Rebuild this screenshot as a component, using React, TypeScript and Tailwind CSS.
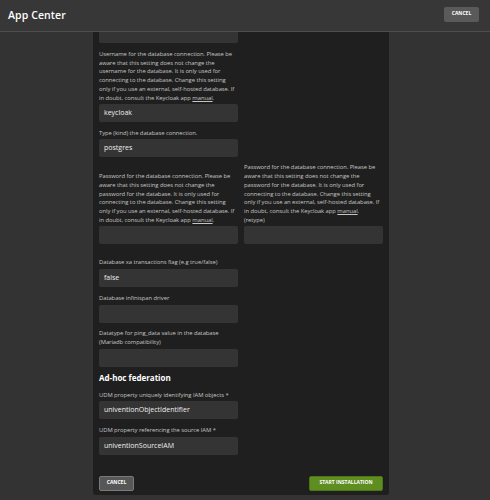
import React from "react";

const font = { fontFamily: '"Open Sans", "Noto Sans", sans-serif' };

function Label({ children }: { children: React.ReactNode }) {
  return (
    <div className="text-[5.85px] leading-[8.7px] text-[#c4c4c4] mb-[2px] tracking-[-0.05px]">{children}</div>
  );
}

function Input({ value }: { value?: string }) {
  return (
    <div className="h-[18px] rounded-[2px] bg-[#343434] flex items-center px-[5px] text-[7px] text-[#eeeeee]">
      {value}
    </div>
  );
}

const Manual = () => <span className="underline">manual</span>;

export default function App() {
  return (
    <div style={font} className="w-[490px] h-[500px] overflow-hidden bg-[#333333] flex flex-col">
      <div className="h-[32px] shrink-0 bg-[#373737] border-b border-[#4e4e4e] flex items-center justify-between pl-[8px] pr-[11px]">
        <div className="text-[10.5px] font-semibold text-white tracking-[0.1px]">App Center</div>
        <div className="w-[35px] h-[15px] rounded-[2px] bg-[#5a5a5a] flex items-center justify-center text-[5px] font-bold text-white mt-[-3px]">
          CANCEL
        </div>
      </div>
      <div className="pl-[93px]">
        <div className="w-[296px] h-[463px] bg-[#1f1f1f] rounded-b-[3px] px-[6px] flex flex-col">
          <div className="h-[11px] rounded-b-[2px] bg-[#343434] w-[139px]" />
          <div className="w-[139px] mt-[7px]">
            <Label>
              Username for the database connection. Please be aware that this setting does not change the username for the database. It is only used for connecting to the database. Change this setting only if you use an external, self-hosted database. If in doubt, consult the Keycloak app <Manual />.
            </Label>
            <Input value="keycloak" />
          </div>
          <div className="w-[139px] mt-[6.5px]">
            <Label>Type (kind) the database connection.</Label>
            <Input value="postgres" />
          </div>
          <div className="flex gap-[6px] items-end mt-[6px]">
            <div className="w-[139px]">
              <Label>
                Password for the database connection. Please be aware that this setting does not change the password for the database. It is only used for connecting to the database. Change this setting only if you use an external, self-hosted database. If in doubt, consult the Keycloak app <Manual />.
              </Label>
              <Input />
            </div>
            <div className="w-[139px]">
              <Label>
                Password for the database connection. Please be aware that this setting does not change the password for the database. It is only used for connecting to the database. Change this setting only if you use an external, self-hosted database. If in doubt, consult the Keycloak app <Manual />.
                <br />
                (retype)
              </Label>
              <Input />
            </div>
          </div>
          <div className="w-[139px] mt-[14px]">
            <Label>Database xa transactions flag (e.g true/false)</Label>
            <Input value="false" />
          </div>
          <div className="w-[139px] mt-[7px]">
            <Label>Database infinispan driver</Label>
            <Input />
          </div>
          <div className="w-[139px] mt-[6.5px]">
            <Label>Datatype for ping_data value in the database (Mariadb compatibility)</Label>
            <Input />
          </div>
          <div className="mt-[5px] text-[8px] leading-[12px] font-bold text-white">Ad-hoc federation</div>
          <div className="w-[139px] mt-[7px]">
            <Label>UDM property uniquely identifying IAM objects *</Label>
            <Input value="univentionObjectIdentifier" />
          </div>
          <div className="w-[139px] mt-[7px]">
            <Label>UDM property referencing the source IAM *</Label>
            <Input value="univentionSourceIAM" />
          </div>
          <div className="flex justify-between mt-[20.5px]">
            <div className="w-[35px] h-[15px] rounded-[2px] bg-[#575757] border border-[#7a7a7a] flex items-center justify-center text-[5px] font-bold text-white">
              CANCEL
            </div>
            <div className="w-[74px] h-[15px] rounded-[2px] bg-[#5e8d20] border border-[#4c7418] flex items-center justify-center text-[5px] font-bold text-white">
              START INSTALLATION
            </div>
          </div>
        </div>
      </div>
    </div>
  );
}
